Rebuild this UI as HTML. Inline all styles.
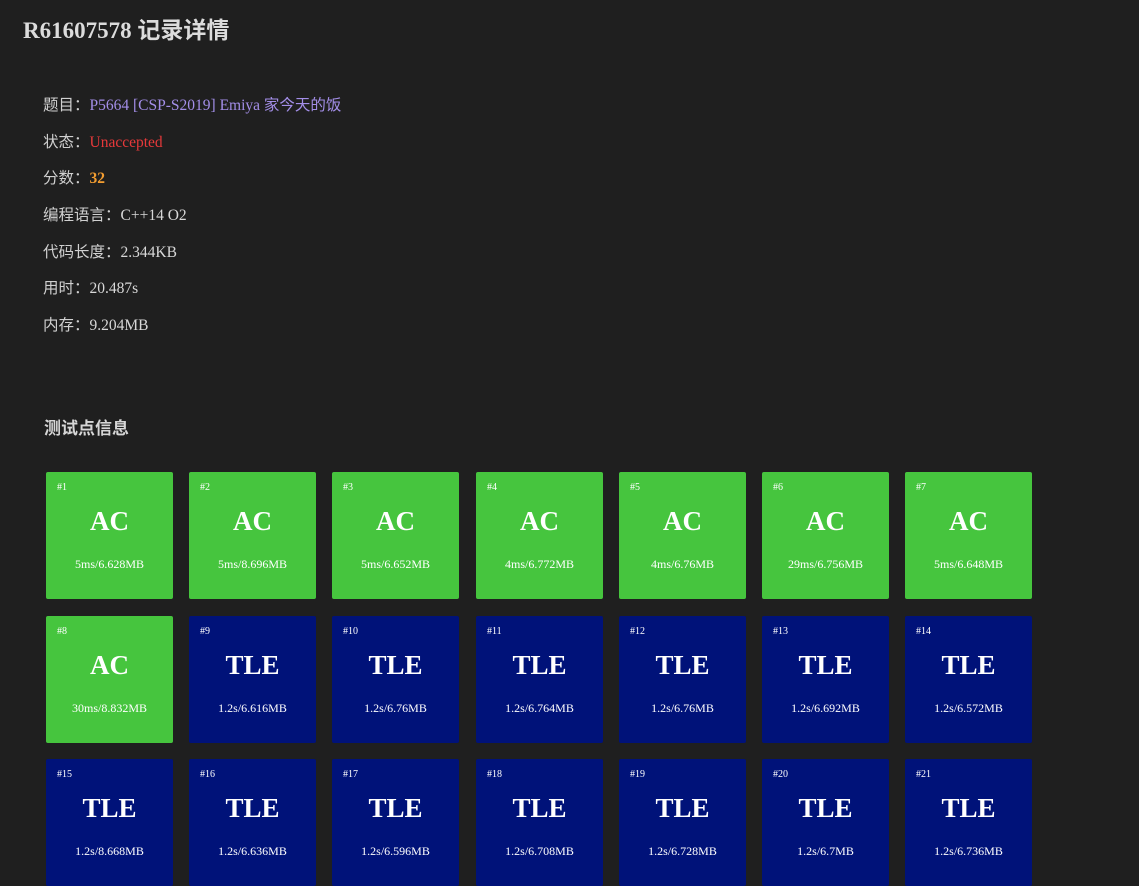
<!DOCTYPE html>
<html><head><meta charset="utf-8"><style>
html,body{margin:0;padding:0;background:#1f1f1f;width:1139px;height:855px;overflow:hidden;color:#d8d8d8;font-family:"Liberation Serif","Noto Sans CJK SC",serif}
h1{position:absolute;left:23px;top:11px;margin:0;font-size:23px;font-weight:bold;color:#dcdcdc;line-height:34px}
h1 span{font-size:23px}
.info{position:absolute;left:43px;top:92px;font-size:15.5px}
.info div{height:36.7px;line-height:24px}
.l{font-family:"Noto Sans CJK SC",sans-serif;color:#d0d0d0}
h2{position:absolute;left:44px;top:414px;margin:0;font-size:17px;font-family:"Noto Sans CJK SC",sans-serif;font-weight:bold;color:#d6d6d6}
.c{position:absolute;width:127px;height:127px;border-radius:2px;color:#fff;text-align:center}
.g{background:#46c53e}.b{background:#001279}
.n{position:absolute;left:11px;top:10px;font-size:10px}
.s{position:absolute;left:0;right:0;top:34px;font-size:27px;font-weight:bold}
.m{position:absolute;left:0;right:0;top:85px;font-size:12px}
</style></head><body>
<h1>R61607578 <span style="font-family:'Noto Sans CJK SC',sans-serif">记录详情</span></h1>
<div class="info">
<div><span class="l">题目：</span><span style="color:#a38ee8">P5664 [CSP-S2019] Emiya <span style="font-family:'Noto Sans CJK SC',sans-serif">家今天的饭</span></span></div>
<div><span class="l">状态：</span><span style="color:#e7393a">Unaccepted</span></div>
<div><span class="l">分数：</span><b style="color:#f39d30">32</b></div>
<div><span class="l">编程语言：</span>C++14 O2</div>
<div><span class="l">代码长度：</span>2.344KB</div>
<div><span class="l">用时：</span>20.487s</div>
<div><span class="l">内存：</span>9.204MB</div>
</div>
<h2>测试点信息</h2>
<div id="g"></div>
<script>
var d=[["AC","5ms/6.628MB"],["AC","5ms/8.696MB"],["AC","5ms/6.652MB"],["AC","4ms/6.772MB"],["AC","4ms/6.76MB"],["AC","29ms/6.756MB"],["AC","5ms/6.648MB"],["AC","30ms/8.832MB"],["TLE","1.2s/6.616MB"],["TLE","1.2s/6.76MB"],["TLE","1.2s/6.764MB"],["TLE","1.2s/6.76MB"],["TLE","1.2s/6.692MB"],["TLE","1.2s/6.572MB"],["TLE","1.2s/8.668MB"],["TLE","1.2s/6.636MB"],["TLE","1.2s/6.596MB"],["TLE","1.2s/6.708MB"],["TLE","1.2s/6.728MB"],["TLE","1.2s/6.7MB"],["TLE","1.2s/6.736MB"]];
var h="";d.forEach(function(e,i){var x=46+Math.round((i%7)*143.2),y=472+Math.round(Math.floor(i/7)*143.5);
h+='<div class="c '+(e[0]=="AC"?"g":"b")+'" style="left:'+x+'px;top:'+y+'px"><span class="n">#'+(i+1)+'</span><div class="s">'+e[0]+'</div><div class="m">'+e[1]+'</div></div>';});
document.getElementById("g").innerHTML=h;
</script>
</body></html>
